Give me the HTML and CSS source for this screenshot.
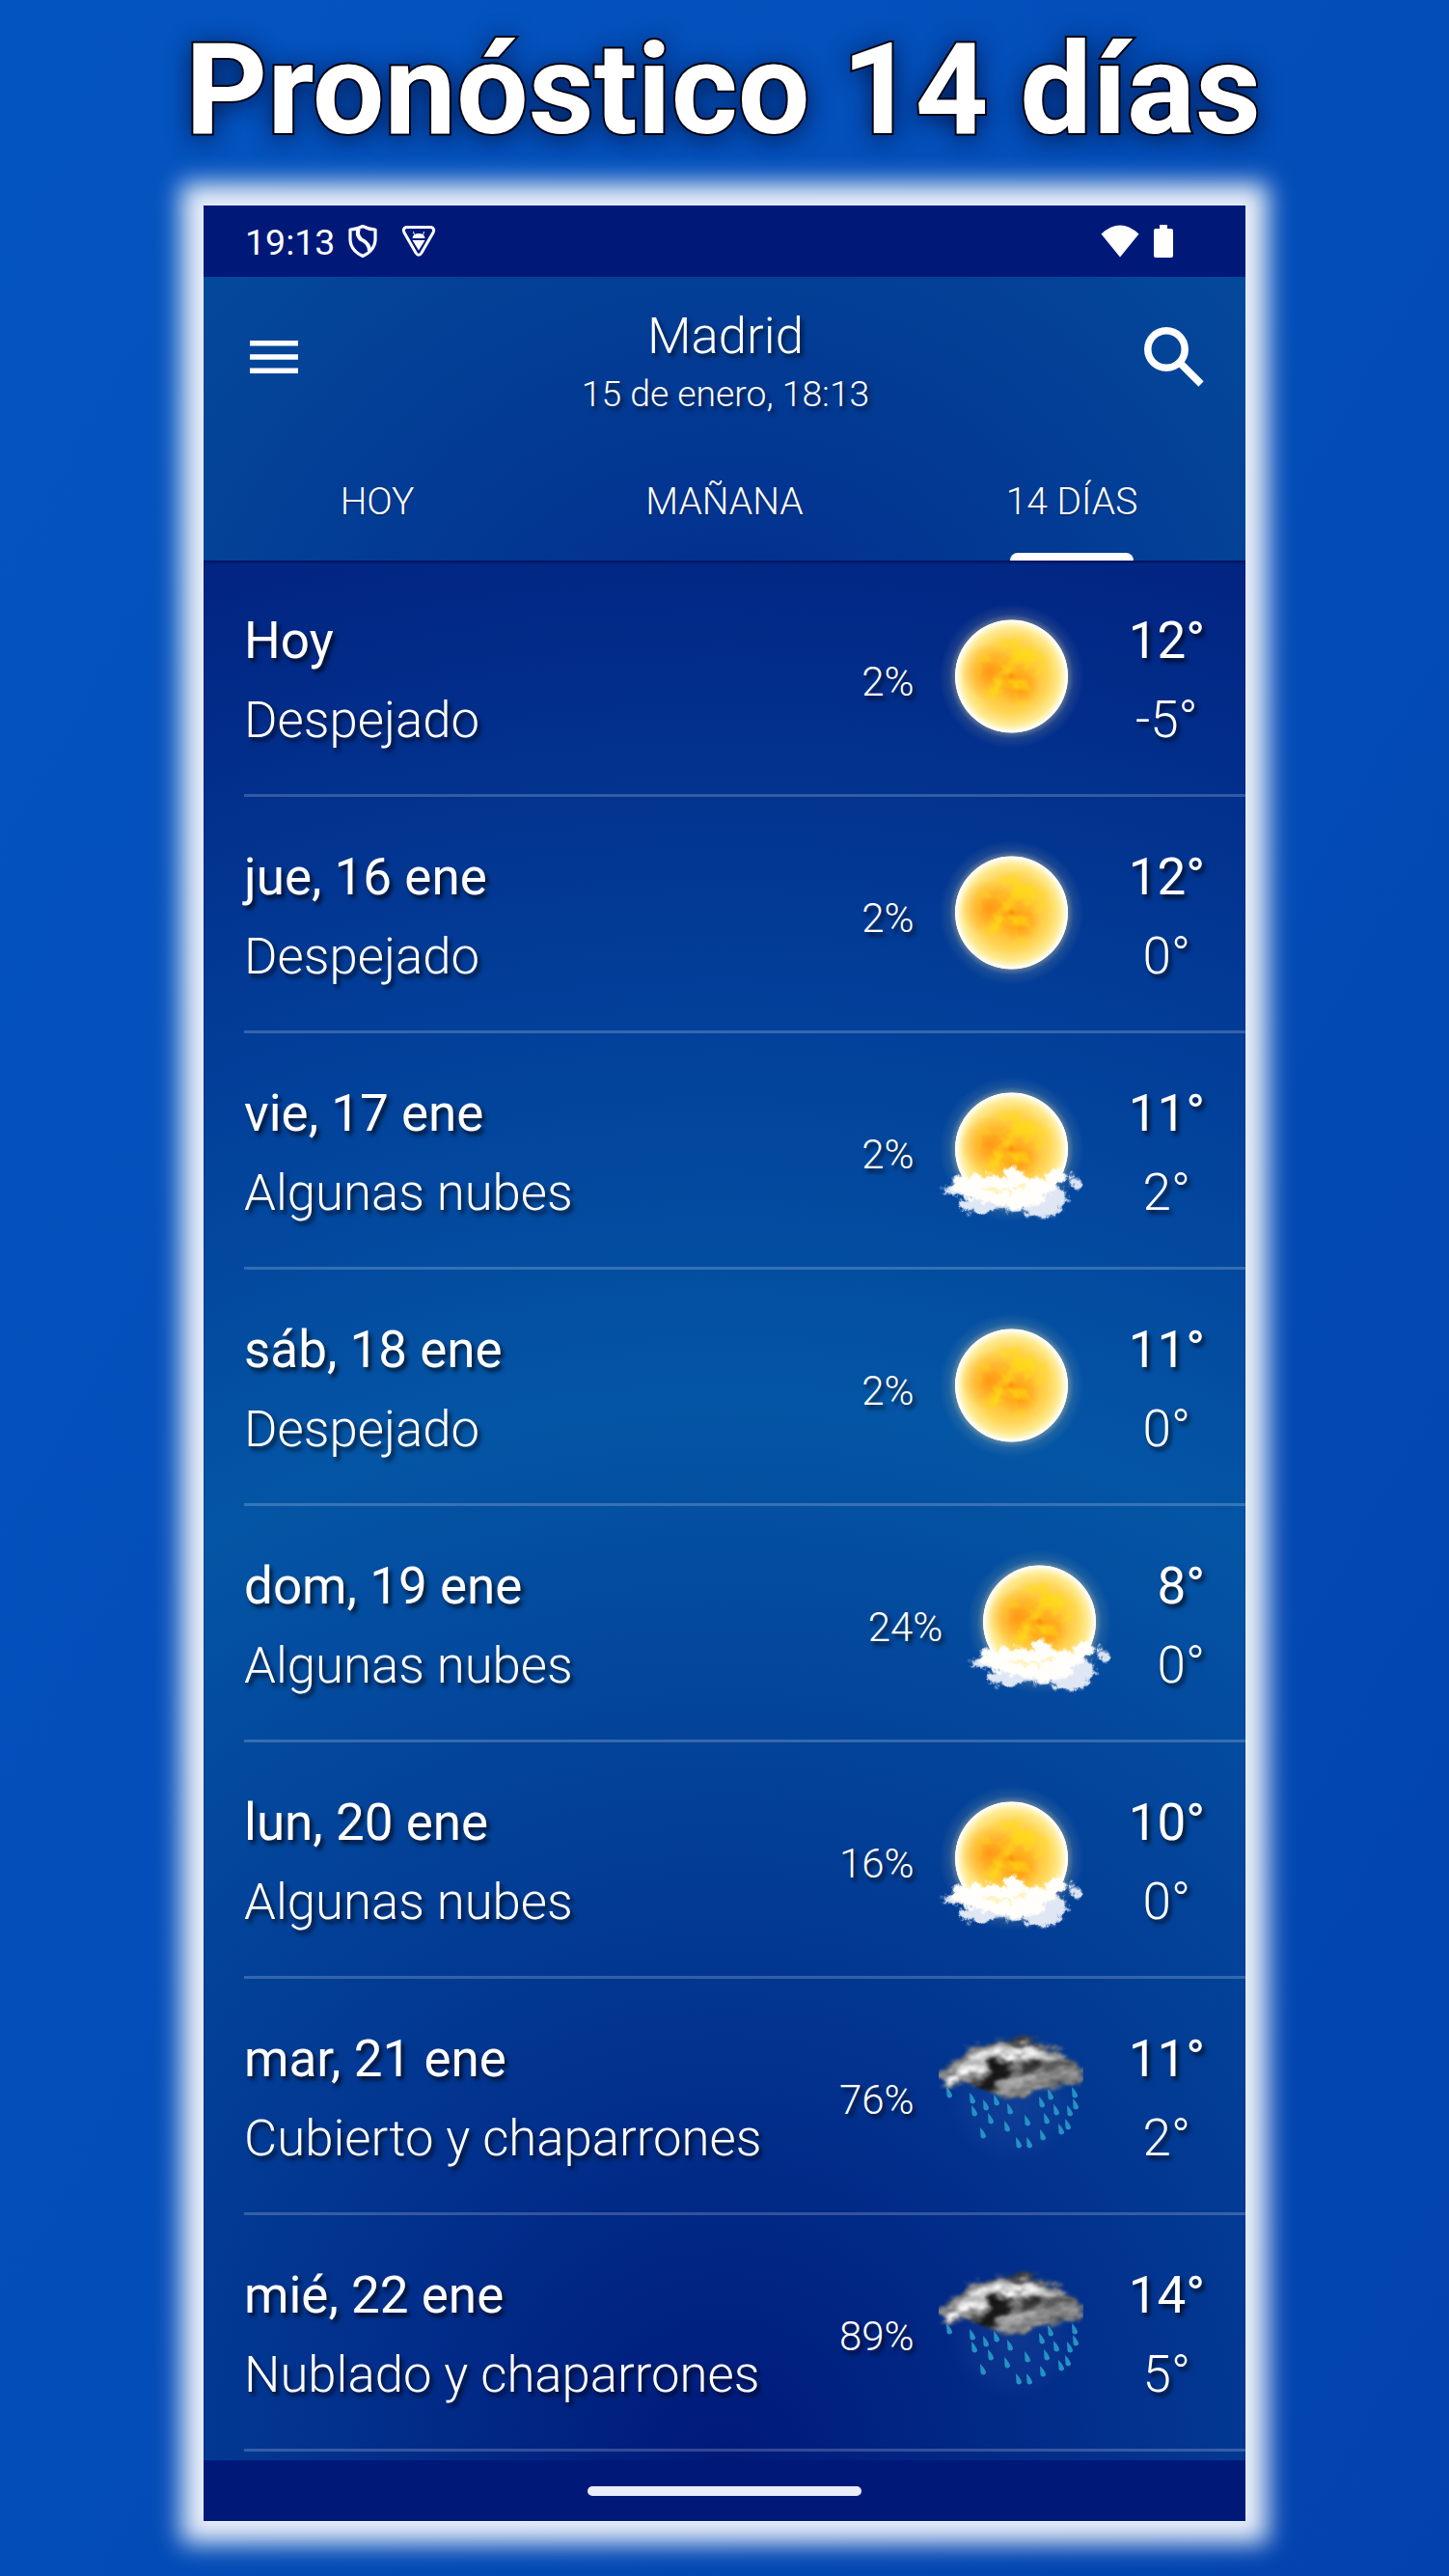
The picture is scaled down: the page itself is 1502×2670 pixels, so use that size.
FILE: index.html
```html
<!DOCTYPE html>
<html lang="es">
  <head>
    <meta charset="utf-8">
    <title>Pronóstico 14 días</title>
    <link rel="stylesheet" href="styles.css">
  </head>
  <body>
    <!-- weather icons, reused by every row -->
    <svg class="sprites" width="0" height="0">
      <defs>
        <radialGradient id="sunFill">
          <stop offset="0" stop-color="#ffb01c"/>
          <stop offset="0.35" stop-color="#ffbe30"/>
          <stop offset="0.65" stop-color="#ffd558"/>
          <stop offset="0.85" stop-color="#ffea90"/>
          <stop offset="0.96" stop-color="#fffbe0"/>
          <stop offset="1" stop-color="#fff"/>
        </radialGradient>
        <radialGradient id="sunGlow">
          <stop offset="0.76" stop-color="#ffe9a0" stop-opacity="0.4"/>
          <stop offset="0.86" stop-color="#ffe9a0" stop-opacity="0.1"/>
          <stop offset="1" stop-color="#ffe9a0" stop-opacity="0"/>
        </radialGradient>
        <radialGradient id="spot">
          <stop offset="0" stop-color="#ff8a08"/>
          <stop offset="1" stop-color="#ff9a10" stop-opacity="0"/>
        </radialGradient>
        <radialGradient id="mist">
          <stop offset="0" stop-color="#6a86c8" stop-opacity="0.12"/>
          <stop offset="0.7" stop-color="#6a86c8" stop-opacity="0.06"/>
          <stop offset="1" stop-color="#6a86c8" stop-opacity="0"/>
        </radialGradient>
        <filter id="flames" x="-10%" y="-10%" width="120%" height="120%" color-interpolation-filters="sRGB">
          <feGaussianBlur in="SourceGraphic" stdDeviation="5" result="soft"/>
          <feTurbulence type="fractalNoise" baseFrequency="0.045" numOctaves="3" seed="8"/>
          <feColorMatrix values="0 0 0 0 1  0 0 0 0 0.87  0 0 0 0 0.08  3.6 0 0 0 -1.5"/>
          <feGaussianBlur stdDeviation="0.7"/>
          <feComposite in2="soft" operator="in"/>
        </filter>
        <filter id="rough" x="-20%" y="-20%" width="140%" height="140%" color-interpolation-filters="sRGB">
          <feGaussianBlur in="SourceGraphic" stdDeviation="1.2" result="soft"/>
          <feTurbulence type="fractalNoise" baseFrequency="0.12" numOctaves="4" seed="5"/>
          <feDisplacementMap in="soft" scale="13" xChannelSelector="R" yChannelSelector="G"/>
          <feGaussianBlur stdDeviation="0.6"/>
        </filter>
        <filter id="streaks" x="-20%" y="-20%" width="140%" height="140%" color-interpolation-filters="sRGB">
          <feGaussianBlur in="SourceGraphic" stdDeviation="2.4" result="soft"/>
          <feTurbulence type="fractalNoise" baseFrequency="0.05 0.1" numOctaves="4" seed="11" result="noise"/>
          <feDisplacementMap in="soft" in2="noise" scale="19" xChannelSelector="R" yChannelSelector="G" result="shape"/>
          <feColorMatrix in="noise" values="0 0 2 0 -0.5  0 0 2 0 -0.5  0 0 2 0 -0.5  0 0 0 0 1" result="grain"/>
          <feComposite in="shape" in2="grain" operator="arithmetic" k1="0.45" k2="0.78" k3="0" k4="0" result="lit"/>
          <feComposite in="lit" in2="shape" operator="in"/>
          <feGaussianBlur stdDeviation="0.8"/>
        </filter>

        <symbol id="sun" viewBox="0 0 150 150">
          <circle cx="75.500" cy="74" r="75" fill="url(#sunGlow)"/>
          <circle cx="75.500" cy="74" r="58.500" fill="url(#sunFill)"/>
          <circle cx="52" cy="69" r="30" fill="url(#spot)" opacity="0.75"/>
          <circle cx="84" cy="84" r="22" fill="url(#spot)" opacity="0.8"/>
          <circle cx="78" cy="70" r="36" filter="url(#flames)" opacity="0.75"/>
          <circle cx="75.500" cy="74" r="5" fill="url(#spot)"/>
          <circle cx="75.500" cy="74" r="57.500" fill="none" stroke="#fff" stroke-width="1.600"/>
        </symbol>

        <symbol id="sun-cloud" viewBox="0 0 150 150">
          <use href="#sun" width="150" height="150"/>
          <g filter="url(#rough)">
            <g fill="#dfe6f4">
              <ellipse cx="19" cy="118" rx="16" ry="4"/>
              <ellipse cx="40" cy="133" rx="19" ry="8"/>
              <ellipse cx="70" cy="131" rx="22" ry="7"/>
              <ellipse cx="106" cy="135" rx="21" ry="10"/>
              <ellipse cx="120" cy="123" rx="12" ry="10"/>
              <ellipse cx="142" cy="110" rx="4" ry="6"/>
              <ellipse cx="137" cy="102" rx="3" ry="3"/>
            </g>
            <g fill="#fffefa">
              <ellipse cx="23" cy="112" rx="10" ry="9"/>
              <ellipse cx="48" cy="107" rx="19" ry="7"/>
              <ellipse cx="77" cy="102" rx="10" ry="8"/>
              <ellipse cx="62" cy="118" rx="38" ry="11"/>
              <ellipse cx="98" cy="114" rx="24" ry="10"/>
              <ellipse cx="121" cy="102" rx="10" ry="8"/>
              <ellipse cx="82" cy="126" rx="28" ry="9"/>
            </g>
            <path d="M48 117q16 -5 30 4M78 111q8 4 12 1" fill="none" stroke="#fff0b0" stroke-width="3"/>
          </g>
        </symbol>

        <symbol id="rain" viewBox="0 0 150 150">
          <ellipse cx="77" cy="86" rx="66" ry="58" fill="url(#mist)"/>
          <g fill="#2592c4" transform="translate(0 5)">
            <path id="drop" d="M8 61q6 6 6 9.500a2.900 2.900 0 0 1 -5.500 0z"/>
            <use href="#drop" x="24" y="6"/>
            <use href="#drop" x="26" y="19"/>
            <use href="#drop" x="38" y="13"/>
            <use href="#drop" x="49" y="8"/>
            <use href="#drop" x="43" y="27"/>
            <use href="#drop" x="35" y="42"/>
            <use href="#drop" x="63" y="17"/>
            <use href="#drop" x="60" y="35"/>
            <use href="#drop" x="72" y="52"/>
            <use href="#drop" x="83" y="52"/>
            <use href="#drop" x="81" y="29"/>
            <use href="#drop" x="96" y="10"/>
            <use href="#drop" x="105" y="2"/>
            <use href="#drop" x="97" y="44"/>
            <use href="#drop" x="101" y="27"/>
            <use href="#drop" x="111" y="18"/>
            <use href="#drop" x="116" y="38"/>
            <use href="#drop" x="125" y="19"/>
            <use href="#drop" x="123" y="33"/>
            <use href="#drop" x="131" y="12"/>
            <use href="#drop" x="130" y="0"/>
          </g>
          <g filter="url(#streaks)" transform="translate(0 7)">
            <path d="M-2 46Q14 36 24 26Q34 14 58 10Q78 5 100 11Q122 15 130 25Q138 33 152 38L148 54Q128 57 118 63Q98 64 76 72Q58 68 46 63Q34 57 0 57Z" fill="#8a8a8a"/>
            <path d="M70 9Q88 5 108 17L88 20Z" fill="#3c3c3e"/>
            <path d="M12 46Q28 34 44 22Q62 11 84 17Q108 16 124 30Q106 34 90 26Q66 26 50 38Q38 50 6 55Z" fill="#e4e4e4"/>
            <path d="M50 30Q62 24 78 34Q72 48 62 54Q62 64 46 62Q30 58 40 53Q54 46 50 30Z" fill="#161616"/>
            <path d="M84 29Q102 29 106 40Q88 50 76 43Q92 40 84 29Z" fill="#343434"/>
            <path d="M108 36Q124 32 140 39L132 44Q118 46 108 36Z" fill="#5a5a5a"/>
            <path d="M66 54Q92 44 118 50Q104 58 82 60Z" fill="#a4a4a4"/>
            <path d="M62 24Q82 20 92 28Q78 34 66 30Z" fill="#f4f4f4"/>
          </g>
        </symbol>
      </defs>
    </svg>

    <h1>Pronóstico 14 días</h1>

    <div class="phone">
      <div class="statusbar">
        <span class="clock">19:13</span>
        <svg class="shield" width="30" height="36" viewBox="0 0 30 36" fill="none" stroke="#fff" stroke-width="3.2" stroke-linejoin="round">
          <path d="M15 2.500Q8.500 6 2 6V17Q3 28 15 33.500Q27 28 28 17V6Q21.500 6 15 2.500Z"/>
          <path d="M11 5Q8 11 13 16Q22 20 22 28" stroke-width="4"/>
        </svg>
        <svg class="play" width="36" height="34" viewBox="0 0 36 34">
          <path d="M5 2.500H31Q35 4 33 8L21 29Q18 33.500 15 29L3 8Q1 4 5 2.500Z" fill="none" stroke="#fff" stroke-width="3"/>
          <path d="M13.500 10.500L12.500 7M22.500 10.500L23.500 7" stroke="#fff" fill="none"/>
          <path d="M11.500 14Q12 9 18 9T24.500 14ZM11.500 16H24.500L18 26.500Z" fill="#fff"/>
        </svg>
        <svg class="wifi" width="40" height="34" viewBox="0 0 40 34"><path d="M0.500 9.500Q20 -8.500 39.500 9.500L20 33.500Z" fill="#fff"/></svg>
        <svg class="battery" width="20" height="34" viewBox="0 0 20 34"><path d="M6 0H14V4H18Q20 4 20 6V32Q20 34 18 34H2Q0 34 0 32V6Q0 4 2 4H6Z" fill="#fff"/></svg>
      </div>

      <div class="header">
        <div class="toolbar">
          <svg width="50" height="34" viewBox="0 0 50 34" fill="#fff"><path d="M0 0H50V5.500H0ZM0 14.200H50V19.700H0ZM0 28.400H50V34H0Z"/></svg>
          <div class="place">
            <div class="city">Madrid</div>
            <div class="date">15 de enero, 18:13</div>
          </div>
          <svg width="62" height="62" viewBox="0 0 62 62" fill="none" stroke="#fff">
            <circle cx="23" cy="23" r="19.200" stroke-width="7.500"/>
            <path d="M38.500 38.500L59 59" stroke-width="7.500"/>
            <path d="M36 36L41 41" stroke-width="5"/>
          </svg>
        </div>
        <div class="tabs">
          <div class="tab">HOY</div>
          <div class="tab">MAÑANA</div>
          <div class="tab active">14 DÍAS</div>
        </div>
      </div>

      <div class="days">
        <div class="day">
          <div class="info"><div class="name">Hoy</div><div class="sky">Despejado</div></div>
          <div class="rain">2%</div>
          <svg class="icon"><use href="#sun"/></svg>
          <div class="temps"><div class="max">12°</div><div class="min">-5°</div></div>
        </div>
        <div class="day">
          <div class="info"><div class="name">jue, 16 ene</div><div class="sky">Despejado</div></div>
          <div class="rain">2%</div>
          <svg class="icon"><use href="#sun"/></svg>
          <div class="temps"><div class="max">12°</div><div class="min">0°</div></div>
        </div>
        <div class="day">
          <div class="info"><div class="name">vie, 17 ene</div><div class="sky">Algunas nubes</div></div>
          <div class="rain">2%</div>
          <svg class="icon"><use href="#sun-cloud"/></svg>
          <div class="temps"><div class="max">11°</div><div class="min">2°</div></div>
        </div>
        <div class="day">
          <div class="info"><div class="name">sáb, 18 ene</div><div class="sky">Despejado</div></div>
          <div class="rain">2%</div>
          <svg class="icon"><use href="#sun"/></svg>
          <div class="temps"><div class="max">11°</div><div class="min">0°</div></div>
        </div>
        <div class="day">
          <div class="info"><div class="name">dom, 19 ene</div><div class="sky">Algunas nubes</div></div>
          <div class="rain">24%</div>
          <svg class="icon"><use href="#sun-cloud"/></svg>
          <div class="temps"><div class="max">8°</div><div class="min">0°</div></div>
        </div>
        <div class="day">
          <div class="info"><div class="name">lun, 20 ene</div><div class="sky">Algunas nubes</div></div>
          <div class="rain">16%</div>
          <svg class="icon"><use href="#sun-cloud"/></svg>
          <div class="temps"><div class="max">10°</div><div class="min">0°</div></div>
        </div>
        <div class="day">
          <div class="info"><div class="name">mar, 21 ene</div><div class="sky">Cubierto y chaparrones</div></div>
          <div class="rain">76%</div>
          <svg class="icon"><use href="#rain"/></svg>
          <div class="temps"><div class="max">11°</div><div class="min">2°</div></div>
        </div>
        <div class="day">
          <div class="info"><div class="name">mié, 22 ene</div><div class="sky">Nublado y chaparrones</div></div>
          <div class="rain">89%</div>
          <svg class="icon"><use href="#rain"/></svg>
          <div class="temps"><div class="max">14°</div><div class="min">5°</div></div>
        </div>
      </div>

      <div class="navbar"><div class="pill"></div></div>
    </div>
  </body>
</html>
```
FILE: styles.css
```css
*{
  box-sizing: border-box;
}
body{
  margin: 0;
  width: 1502px;
  height: 2670px;
  overflow: hidden;
  background: linear-gradient(120deg, #0454c0 0%, #034db8 50%, #0242ae 100%);
  font-family: Roboto, "Liberation Sans", sans-serif;
  color: white;
}
.sprites{
  position: absolute;
}
h1{
  margin: 0;
  height: 213px;
  padding: 15px 3px 0 0;
  text-align: center;
  font-size: 132.5px;
  line-height: 156px;
  font-weight: bold;
  white-space: nowrap;
  -webkit-text-stroke: 4px black;
  paint-order: stroke fill;
  text-shadow: 0 4px 26px rgba(0,10,50,0.85);
}
.phone{
  width: 1080px;
  height: 2400px;
  margin: 0 auto;
  display: flex;
  flex-direction: column;
  box-shadow: 0 0 24px 23px #e9eff9;
}
.statusbar{
  height: 74px;
  padding: 0 75px 0 43px;
  display: flex;
  align-items: center;
  background: #001979;
}
.clock{
  font-size: 37.5px;
  width: 95px;
  padding-top: 1px;
}
.shield{
  margin-left: 12px;
}
.play{
  margin-left: 25px;
}
.wifi{
  margin-left: auto;
}
.battery{
  margin-left: 15px;
}
.header{
  height: 294px;
  display: flex;
  flex-direction: column;
  background: radial-gradient(circle at 50% 170%, #01288a 0%, #023390 230px, #04499b 740px);
}
.toolbar{
  height: 174px;
  padding: 0 43px 8px 48px;
  display: flex;
  align-items: center;
  justify-content: space-between;
}
.place{
  padding: 11px 0 0 9px;
  text-align: center;
  font-weight: 300;
  text-shadow: 3px 4px 4px rgba(0,0,0,0.6);
}
.city{
  font-size: 52.7px;
  line-height: 64px;
}
.date{
  font-size: 37.3px;
  line-height: 56px;
}
.tabs{
  flex: 1;
  display: flex;
}
.tab{
  flex: 1;
  display: flex;
  flex-direction: column;
  align-items: center;
  font-size: 39px;
  line-height: 118px;
  font-weight: 300;
  text-shadow: 0 1px 2px rgba(0,0,0,0.4);
}
.tab.active::after{
  content: "";
  width: 128px;
  height: 8px;
  margin-top: -6px;
  border-radius: 8px 8px 0 0;
  background: white;
}
.days{
  height: 1969px;
  box-shadow: inset 0 2px 2px rgba(0,0,50,0.5);
  background: radial-gradient(circle at 50% 100%, #001979 0%, #023590 480px, #0455a5 1100px, #02409a 1500px, #022d8a 1850px, #022382 2050px);
}
.day{
  height: 245px;
  margin-left: 42px;
  padding-right: 42px;
  border-bottom: 3px solid rgba(255,255,255,0.2);
  display: flex;
  align-items: center;
  text-shadow: 3px 4px 4px rgba(0,0,0,0.7);
}
.info{
  flex: 1;
}
.info, .temps{
  padding-top: 6px;
}
.name, .sky, .max, .min{
  font-size: 53px;
  line-height: 82px;
  white-space: nowrap;
}
.sky, .min, .rain{
  font-weight: 300;
}
.sky{
  font-size: 52.7px;
}
.rain{
  font-size: 42px;
  padding-top: 8px;
}
.icon{
  width: 150px;
  height: 150px;
  margin: 0 47px 0 25px;
}
.temps{
  display: flex;
  flex-direction: column;
  align-items: center;
}
.navbar{
  height: 63px;
  display: flex;
  align-items: center;
  justify-content: center;
  background: #001979;
}
.pill{
  width: 284px;
  height: 10px;
  border-radius: 5px;
  background: #e9eef8;
}
```
